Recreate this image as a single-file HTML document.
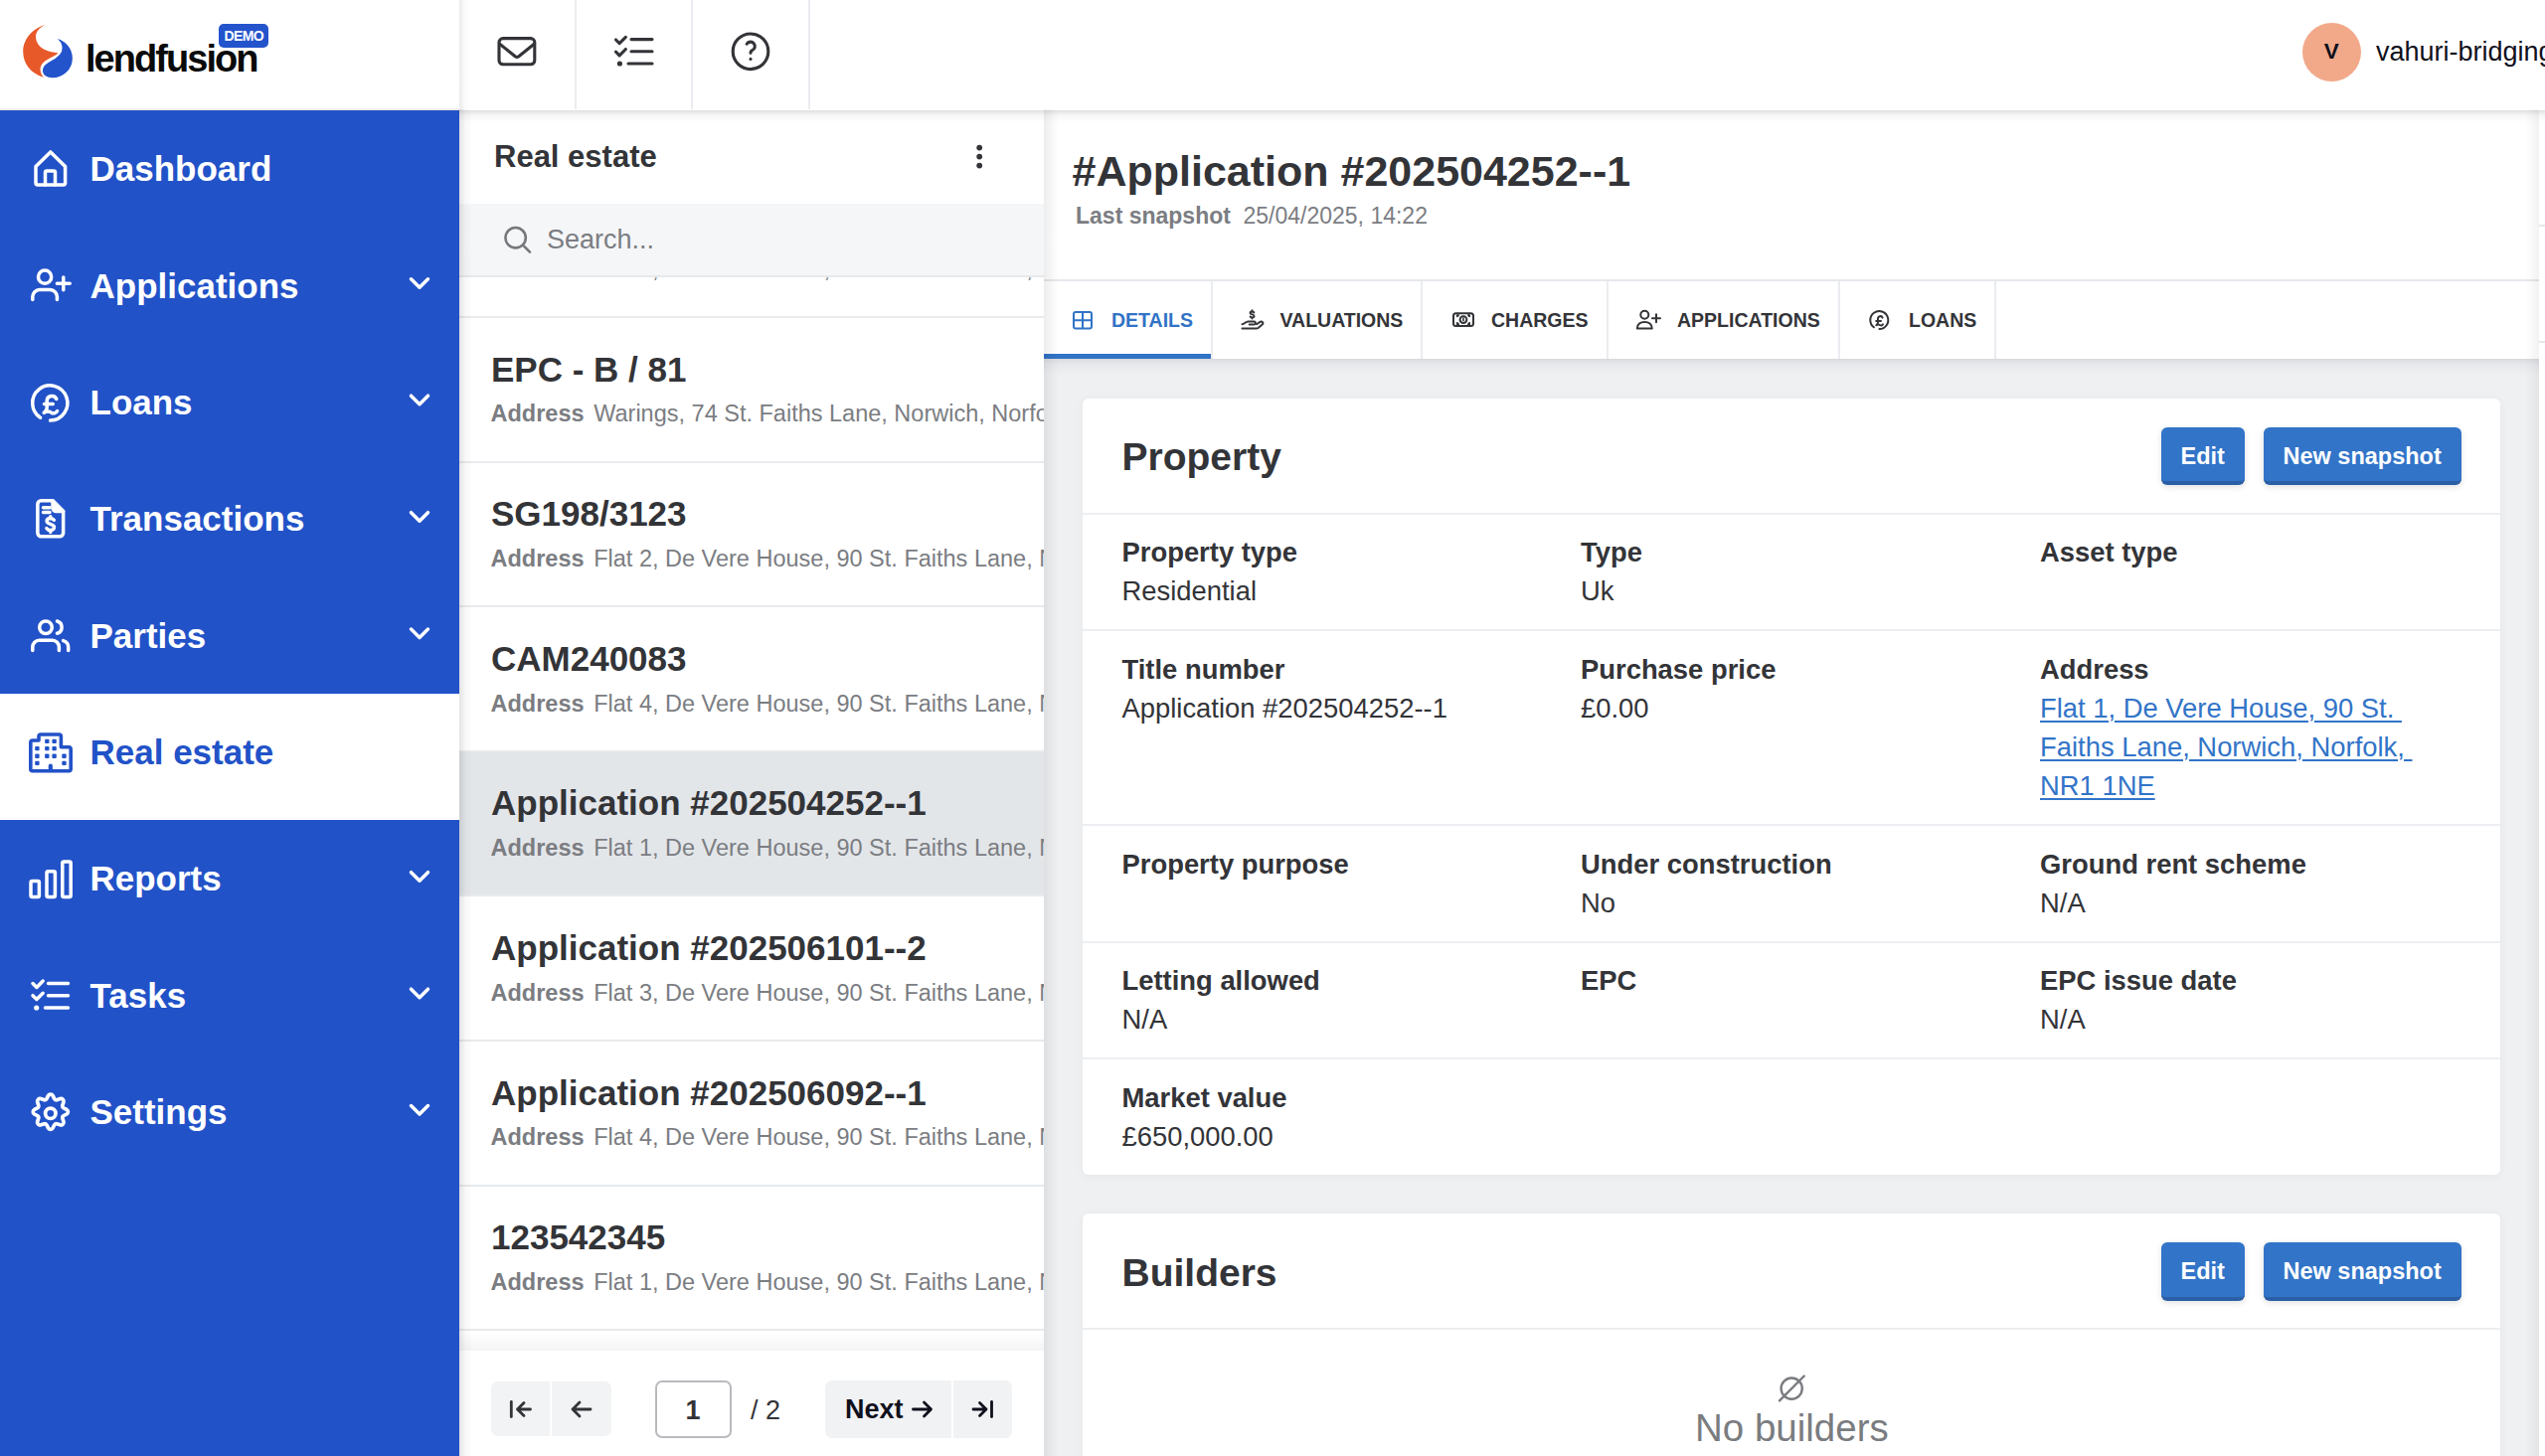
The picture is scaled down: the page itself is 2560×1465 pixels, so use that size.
<!DOCTYPE html><html><head><meta charset="utf-8"><title>Real estate</title><style>
*{box-sizing:border-box;margin:0;padding:0}
html,body{width:2560px;height:1465px;overflow:hidden;background:#fff}
body{position:relative;font-family:"Liberation Sans",sans-serif;-webkit-font-smoothing:antialiased}
.a{position:absolute}
.t{position:absolute;white-space:nowrap}
svg.ic{position:absolute;overflow:visible}
</style></head><body>
<div class="a" style="left:1050.00px;top:110.00px;width:1504.00px;height:1355.00px;background:#eff0f2;"></div>
<div class="a" style="left:2554.00px;top:110.00px;width:6.00px;height:1355.00px;background:#ffffff;"></div>
<div class="a" style="left:2554.00px;top:226.00px;width:6.00px;height:2.00px;background:#e5e7eb;"></div>
<div class="a" style="left:2554.00px;top:343.00px;width:6.00px;height:2.00px;background:#e5e7eb;"></div>
<div class="a" style="left:1050.00px;top:110.00px;width:1504.00px;height:172.00px;background:#ffffff;"></div>
<div class="a" style="left:1050.00px;top:281.00px;width:1504.00px;height:2.00px;background:#e5e7eb;"></div>
<div class="t " style="left:1078.50px;top:144.60px;font-size:43px;line-height:54px;color:#333438;font-weight:700;">#Application #202504252--1</div>
<div class="t " style="left:1082.00px;top:203.13px;font-size:23px;line-height:29px;color:#7b7d82;font-weight:700;">Last snapshot</div>
<div class="t " style="left:1250.50px;top:203.13px;font-size:23px;line-height:29px;color:#7b7d82;">25/04/2025, 14:22</div>
<div class="a" style="left:1050.00px;top:283.00px;width:1504.00px;height:78.00px;background:#ffffff;"></div>
<div class="a" style="left:1218.00px;top:283.00px;width:2.00px;height:78.00px;background:#ebecf0;"></div>
<div class="a" style="left:1429.00px;top:283.00px;width:2.00px;height:78.00px;background:#ebecf0;"></div>
<div class="a" style="left:1616.00px;top:283.00px;width:2.00px;height:78.00px;background:#ebecf0;"></div>
<div class="a" style="left:1849.00px;top:283.00px;width:2.00px;height:78.00px;background:#ebecf0;"></div>
<div class="a" style="left:2006.00px;top:283.00px;width:2.00px;height:78.00px;background:#ebecf0;"></div>
<div class="a" style="left:1050.00px;top:355.50px;width:168.00px;height:5.50px;background:#3173c6;"></div>
<div class="a" style="left:1050.00px;top:361.00px;width:1504.00px;height:16.00px;background:#eff0f2;background:linear-gradient(#d9dadd,#e7e8eb 35%,rgba(239,240,242,0))"></div>
<div class="t " style="left:1118.00px;top:309.84px;font-size:19.5px;line-height:24px;color:#3173c6;font-weight:700;">DETAILS</div>
<div class="t " style="left:1287.50px;top:309.84px;font-size:19.5px;line-height:24px;color:#333438;font-weight:700;">VALUATIONS</div>
<div class="t " style="left:1500.00px;top:309.84px;font-size:19.5px;line-height:24px;color:#333438;font-weight:700;">CHARGES</div>
<div class="t " style="left:1687.00px;top:309.84px;font-size:19.5px;line-height:24px;color:#333438;font-weight:700;">APPLICATIONS</div>
<div class="t " style="left:1920.00px;top:309.84px;font-size:19.5px;line-height:24px;color:#333438;font-weight:700;">LOANS</div>
<div class="a" style="left:1089px;top:400.5px;width:1426px;height:781px;background:#fff;border-radius:6px;box-shadow:0 1px 10px rgba(0,0,0,0.05)"></div>
<div class="t " style="left:1128.50px;top:435.49px;font-size:39px;line-height:49px;color:#333438;font-weight:700;">Property</div>
<div class="a" style="left:2174px;top:429.7px;width:83.5px;height:58.5px;background:#3274c8;border-radius:6px;border-bottom:4px solid #2a5fa6;box-shadow:0 2px 6px rgba(0,0,0,0.12)"></div>
<div class="a" style="left:2277px;top:429.7px;width:199px;height:58.5px;background:#3274c8;border-radius:6px;border-bottom:4px solid #2a5fa6;box-shadow:0 2px 6px rgba(0,0,0,0.12)"></div>
<div class="t " style="left:2193.50px;top:444.76px;font-size:23.5px;line-height:29px;color:#ffffff;font-weight:700;">Edit</div>
<div class="t " style="left:2296.50px;top:444.76px;font-size:23.5px;line-height:29px;color:#ffffff;font-weight:700;">New snapshot</div>
<div class="a" style="left:1089.00px;top:516.00px;width:1426.00px;height:2.00px;background:#eceef1;"></div>
<div class="a" style="left:1089.00px;top:633.00px;width:1426.00px;height:2.00px;background:#eceef1;"></div>
<div class="a" style="left:1089.00px;top:829.20px;width:1426.00px;height:2.00px;background:#eceef1;"></div>
<div class="a" style="left:1089.00px;top:947.10px;width:1426.00px;height:2.00px;background:#eceef1;"></div>
<div class="a" style="left:1089.00px;top:1064.30px;width:1426.00px;height:2.00px;background:#eceef1;"></div>
<div class="t " style="left:1128.50px;top:538.81px;font-size:27.4px;line-height:34px;color:#333438;font-weight:700;">Property type</div>
<div class="t " style="left:1128.50px;top:577.81px;font-size:27.4px;line-height:34px;color:#333438;">Residential</div>
<div class="t " style="left:1590.00px;top:538.81px;font-size:27.4px;line-height:34px;color:#333438;font-weight:700;">Type</div>
<div class="t " style="left:1590.00px;top:577.81px;font-size:27.4px;line-height:34px;color:#333438;">Uk</div>
<div class="t " style="left:2052.00px;top:538.81px;font-size:27.4px;line-height:34px;color:#333438;font-weight:700;">Asset type</div>
<div class="t " style="left:1128.50px;top:656.51px;font-size:27.4px;line-height:34px;color:#333438;font-weight:700;">Title number</div>
<div class="t " style="left:1128.50px;top:695.51px;font-size:27.4px;line-height:34px;color:#333438;">Application #202504252--1</div>
<div class="t " style="left:1590.00px;top:656.51px;font-size:27.4px;line-height:34px;color:#333438;font-weight:700;">Purchase price</div>
<div class="t " style="left:1590.00px;top:695.51px;font-size:27.4px;line-height:34px;color:#333438;">&pound;0.00</div>
<div class="t " style="left:2052.00px;top:656.51px;font-size:27.4px;line-height:34px;color:#333438;font-weight:700;">Address</div>
<div class="t " style="left:2052.00px;top:695.51px;font-size:27.4px;line-height:34px;color:#3274c8;text-decoration:underline;text-decoration-thickness:2px;text-underline-offset:3px">Flat 1, De Vere House, 90 St.&nbsp;</div>
<div class="t " style="left:2052.00px;top:734.51px;font-size:27.4px;line-height:34px;color:#3274c8;text-decoration:underline;text-decoration-thickness:2px;text-underline-offset:3px">Faiths Lane, Norwich, Norfolk,&nbsp;</div>
<div class="t " style="left:2052.00px;top:773.51px;font-size:27.4px;line-height:34px;color:#3274c8;text-decoration:underline;text-decoration-thickness:2px;text-underline-offset:3px">NR1 1NE</div>
<div class="t " style="left:1128.50px;top:852.71px;font-size:27.4px;line-height:34px;color:#333438;font-weight:700;">Property purpose</div>
<div class="t " style="left:1590.00px;top:852.71px;font-size:27.4px;line-height:34px;color:#333438;font-weight:700;">Under construction</div>
<div class="t " style="left:1590.00px;top:891.71px;font-size:27.4px;line-height:34px;color:#333438;">No</div>
<div class="t " style="left:2052.00px;top:852.71px;font-size:27.4px;line-height:34px;color:#333438;font-weight:700;">Ground rent scheme</div>
<div class="t " style="left:2052.00px;top:891.71px;font-size:27.4px;line-height:34px;color:#333438;">N/A</div>
<div class="t " style="left:1128.50px;top:969.51px;font-size:27.4px;line-height:34px;color:#333438;font-weight:700;">Letting allowed</div>
<div class="t " style="left:1128.50px;top:1008.51px;font-size:27.4px;line-height:34px;color:#333438;">N/A</div>
<div class="t " style="left:1590.00px;top:969.51px;font-size:27.4px;line-height:34px;color:#333438;font-weight:700;">EPC</div>
<div class="t " style="left:2052.00px;top:969.51px;font-size:27.4px;line-height:34px;color:#333438;font-weight:700;">EPC issue date</div>
<div class="t " style="left:2052.00px;top:1008.51px;font-size:27.4px;line-height:34px;color:#333438;">N/A</div>
<div class="t " style="left:1128.50px;top:1087.71px;font-size:27.4px;line-height:34px;color:#333438;font-weight:700;">Market value</div>
<div class="t " style="left:1128.50px;top:1126.71px;font-size:27.4px;line-height:34px;color:#333438;">&pound;650,000.00</div>
<div class="a" style="left:1089px;top:1220.7px;width:1426px;height:300px;background:#fff;border-radius:6px;box-shadow:0 1px 10px rgba(0,0,0,0.05)"></div>
<div class="t " style="left:1128.50px;top:1255.59px;font-size:39px;line-height:49px;color:#333438;font-weight:700;">Builders</div>
<div class="a" style="left:2174px;top:1250px;width:83.5px;height:58.5px;background:#3274c8;border-radius:6px;border-bottom:4px solid #2a5fa6;box-shadow:0 2px 6px rgba(0,0,0,0.12)"></div>
<div class="a" style="left:2277px;top:1250px;width:199px;height:58.5px;background:#3274c8;border-radius:6px;border-bottom:4px solid #2a5fa6;box-shadow:0 2px 6px rgba(0,0,0,0.12)"></div>
<div class="t " style="left:2193.50px;top:1265.06px;font-size:23.5px;line-height:29px;color:#ffffff;font-weight:700;">Edit</div>
<div class="t " style="left:2296.50px;top:1265.06px;font-size:23.5px;line-height:29px;color:#ffffff;font-weight:700;">New snapshot</div>
<div class="a" style="left:1089.00px;top:1336.30px;width:1426.00px;height:2.00px;background:#eceef1;"></div>
<svg class="ic" style="left:0;top:0" width="2560" height="1465"><g fill="none" stroke="#7a7c80" stroke-width="2.4" stroke-linecap="round"><circle cx="1802.2" cy="1397.1" r="10.6"/><line x1="1790" y1="1409.3" x2="1814.8" y2="1384.5"/></g></svg>
<div class="t " style="left:1705.00px;top:1412.56px;font-size:38.5px;line-height:48px;color:#7a7c80;">No builders</div>
<div class="a" style="left:1050.00px;top:110.00px;width:14.00px;height:1355.00px;background:transparent;background:linear-gradient(90deg,rgba(0,0,0,0.07),rgba(0,0,0,0))"></div>
<div class="a" style="left:2540.00px;top:110.00px;width:14.00px;height:1355.00px;background:transparent;background:linear-gradient(270deg,rgba(0,0,0,0.05),rgba(0,0,0,0))"></div>
<div class="a" style="left:462.00px;top:110.00px;width:588.00px;height:1355.00px;background:#ffffff;"></div>
<div class="a" style="left:462px;top:110px;width:588px;height:1249px;overflow:hidden">
<div class="a" style="left:0.00px;top:207.90px;width:588.00px;height:2.00px;background:#e8eaed;"></div>
<div class="t " style="left:31.50px;top:146.86px;font-size:23.5px;line-height:29px;color:#7b7d82;font-weight:700;">Address</div>
<div class="t " style="left:135.20px;top:146.86px;font-size:23.5px;line-height:29px;color:#7b7d82;">Flat 5, De Vere House, 90 St. Faiths Lane, Norwich, Norfolk</div>
<div class="a" style="left:0.00px;top:353.50px;width:588.00px;height:2.00px;background:#e8eaed;"></div>
<div class="t " style="left:32.00px;top:239.57px;font-size:35px;line-height:44px;color:#333438;font-weight:700;">EPC - B / 81</div>
<div class="t " style="left:31.50px;top:292.46px;font-size:23.5px;line-height:29px;color:#7b7d82;font-weight:700;">Address</div>
<div class="t " style="left:135.20px;top:292.46px;font-size:23.5px;line-height:29px;color:#7b7d82;">Warings, 74 St. Faiths Lane, Norwich, Norfolk, NR1 1NE</div>
<div class="a" style="left:0.00px;top:499.10px;width:588.00px;height:2.00px;background:#e8eaed;"></div>
<div class="t " style="left:32.00px;top:385.17px;font-size:35px;line-height:44px;color:#333438;font-weight:700;">SG198/3123</div>
<div class="t " style="left:31.50px;top:438.06px;font-size:23.5px;line-height:29px;color:#7b7d82;font-weight:700;">Address</div>
<div class="t " style="left:135.20px;top:438.06px;font-size:23.5px;line-height:29px;color:#7b7d82;">Flat 2, De Vere House, 90 St. Faiths Lane, Norwich</div>
<div class="a" style="left:0.00px;top:644.70px;width:588.00px;height:2.00px;background:#e8eaed;"></div>
<div class="t " style="left:32.00px;top:530.77px;font-size:35px;line-height:44px;color:#333438;font-weight:700;">CAM240083</div>
<div class="t " style="left:31.50px;top:583.66px;font-size:23.5px;line-height:29px;color:#7b7d82;font-weight:700;">Address</div>
<div class="t " style="left:135.20px;top:583.66px;font-size:23.5px;line-height:29px;color:#7b7d82;">Flat 4, De Vere House, 90 St. Faiths Lane, Norwich</div>
<div class="a" style="left:0.00px;top:646.70px;width:588.00px;height:145.60px;background:#e3e6e9;"></div>
<div class="a" style="left:0.00px;top:790.30px;width:588.00px;height:2.00px;background:#e8eaed;"></div>
<div class="t " style="left:32.00px;top:676.37px;font-size:35px;line-height:44px;color:#333438;font-weight:700;">Application #202504252--1</div>
<div class="t " style="left:31.50px;top:729.26px;font-size:23.5px;line-height:29px;color:#7b7d82;font-weight:700;">Address</div>
<div class="t " style="left:135.20px;top:729.26px;font-size:23.5px;line-height:29px;color:#7b7d82;">Flat 1, De Vere House, 90 St. Faiths Lane, Norwich</div>
<div class="a" style="left:0.00px;top:935.90px;width:588.00px;height:2.00px;background:#e8eaed;"></div>
<div class="t " style="left:32.00px;top:821.97px;font-size:35px;line-height:44px;color:#333438;font-weight:700;">Application #202506101--2</div>
<div class="t " style="left:31.50px;top:874.86px;font-size:23.5px;line-height:29px;color:#7b7d82;font-weight:700;">Address</div>
<div class="t " style="left:135.20px;top:874.86px;font-size:23.5px;line-height:29px;color:#7b7d82;">Flat 3, De Vere House, 90 St. Faiths Lane, Norwich</div>
<div class="a" style="left:0.00px;top:1081.50px;width:588.00px;height:2.00px;background:#e8eaed;"></div>
<div class="t " style="left:32.00px;top:967.57px;font-size:35px;line-height:44px;color:#333438;font-weight:700;">Application #202506092--1</div>
<div class="t " style="left:31.50px;top:1020.46px;font-size:23.5px;line-height:29px;color:#7b7d82;font-weight:700;">Address</div>
<div class="t " style="left:135.20px;top:1020.46px;font-size:23.5px;line-height:29px;color:#7b7d82;">Flat 4, De Vere House, 90 St. Faiths Lane, Norwich</div>
<div class="a" style="left:0.00px;top:1227.10px;width:588.00px;height:2.00px;background:#e8eaed;"></div>
<div class="t " style="left:32.00px;top:1113.17px;font-size:35px;line-height:44px;color:#333438;font-weight:700;">123542345</div>
<div class="t " style="left:31.50px;top:1166.06px;font-size:23.5px;line-height:29px;color:#7b7d82;font-weight:700;">Address</div>
<div class="t " style="left:135.20px;top:1166.06px;font-size:23.5px;line-height:29px;color:#7b7d82;">Flat 1, De Vere House, 90 St. Faiths Lane, Norwich</div>
<div class="a" style="left:0.00px;top:1372.70px;width:588.00px;height:2.00px;background:#e8eaed;"></div>
<div class="t " style="left:32.00px;top:1258.77px;font-size:35px;line-height:44px;color:#333438;font-weight:700;">Application #202506093--1</div>
<div class="t " style="left:31.50px;top:1311.66px;font-size:23.5px;line-height:29px;color:#7b7d82;font-weight:700;">Address</div>
<div class="t " style="left:135.20px;top:1311.66px;font-size:23.5px;line-height:29px;color:#7b7d82;">Flat 2, De Vere House, 90 St. Faiths Lane, Norwich</div>
</div>
<div class="a" style="left:462.00px;top:110.00px;width:588.00px;height:95.00px;background:#ffffff;"></div>
<div class="t " style="left:497.00px;top:137.76px;font-size:31px;line-height:39px;color:#333438;font-weight:700;">Real estate</div>
<svg class="ic" style="left:0;top:0" width="2560" height="1465"><g fill="#333438"><circle cx="985.2" cy="148.6" r="2.9"/><circle cx="985.2" cy="157.6" r="2.9"/><circle cx="985.2" cy="166.6" r="2.9"/></g></svg>
<div class="a" style="left:462.00px;top:204.70px;width:588.00px;height:73.00px;background:#f5f6f8;"></div>
<div class="a" style="left:462.00px;top:277.00px;width:588.00px;height:1.50px;background:#e6e8eb;"></div>
<svg class="ic" style="left:0;top:0" width="2560" height="1465"><g fill="none" stroke="#76787c" stroke-width="2.6" stroke-linecap="round"><circle cx="518.6" cy="239.2" r="10.2"/><line x1="526" y1="246.6" x2="533" y2="253.6"/></g></svg>
<div class="t " style="left:550.00px;top:223.94px;font-size:27px;line-height:34px;color:#7b7d82;">Search...</div>
<div class="a" style="left:462.00px;top:1340.00px;width:588.00px;height:19.00px;background:transparent;background:linear-gradient(rgba(0,0,0,0),rgba(0,0,0,0.045))"></div>
<div class="a" style="left:462.00px;top:1359.00px;width:588.00px;height:106.00px;background:#ffffff;"></div>
<div class="a" style="left:494px;top:1390.3px;width:121px;height:55px;background:#f2f3f5;border-radius:7px"></div>
<div class="a" style="left:553.00px;top:1390.30px;width:2.00px;height:55.00px;background:#ffffff;"></div>
<div class="a" style="left:658.5px;top:1389px;width:77.5px;height:58px;border:2px solid #b8babe;border-radius:7px;background:#fff"></div>
<div class="t " style="left:689.50px;top:1401.64px;font-size:27px;line-height:34px;color:#333438;font-weight:700;">1</div>
<div class="t " style="left:755.00px;top:1401.64px;font-size:27px;line-height:34px;color:#333438;">/ 2</div>
<div class="a" style="left:829.5px;top:1389px;width:188.5px;height:58px;background:#f1f2f4;border-radius:7px"></div>
<div class="a" style="left:957.00px;top:1389.00px;width:2.00px;height:58.00px;background:#ffffff;"></div>
<div class="t " style="left:850.00px;top:1401.44px;font-size:27px;line-height:34px;color:#10101c;font-weight:700;">Next</div>
<svg class="ic" style="left:0;top:0" width="2560" height="1465"><g fill="none" stroke="#333438" stroke-width="2.8" stroke-linecap="round" stroke-linejoin="round">
<line x1="514.3" y1="1410.5" x2="514.3" y2="1425.5"/><path d="M533.5 1418h-13M527 1411.5l-6.5 6.5l6.5 6.5"/>
<path d="M594 1418h-18M583 1411l-7 7l7 7"/>
</g><g fill="none" stroke="#10101c" stroke-width="2.8" stroke-linecap="round" stroke-linejoin="round">
<path d="M918.5 1418h18M929.5 1411l7 7l-7 7"/>
<line x1="997.5" y1="1410.5" x2="997.5" y2="1425.5"/><path d="M979 1418h13M985.5 1411.5l6.5 6.5l-6.5 6.5"/>
</g></svg>
<div class="a" style="left:462.00px;top:110.00px;width:13.00px;height:1355.00px;background:transparent;background:linear-gradient(90deg,rgba(0,0,0,0.11),rgba(0,0,0,0.03) 45%,rgba(0,0,0,0))"></div>
<div class="a" style="left:0.00px;top:110.70px;width:462.00px;height:1355.00px;background:#2252c8;"></div>
<div class="a" style="left:0.00px;top:698.00px;width:462.00px;height:127.00px;background:#ffffff;"></div>
<div class="t " style="left:90.50px;top:148.07px;font-size:35px;line-height:44px;color:#ffffff;font-weight:700;">Dashboard</div>
<div class="t " style="left:90.50px;top:265.52px;font-size:35px;line-height:44px;color:#ffffff;font-weight:700;">Applications</div>
<div class="t " style="left:90.50px;top:382.97px;font-size:35px;line-height:44px;color:#ffffff;font-weight:700;">Loans</div>
<div class="t " style="left:90.50px;top:500.42px;font-size:35px;line-height:44px;color:#ffffff;font-weight:700;">Transactions</div>
<div class="t " style="left:90.50px;top:617.87px;font-size:35px;line-height:44px;color:#ffffff;font-weight:700;">Parties</div>
<div class="t " style="left:90.50px;top:735.32px;font-size:35px;line-height:44px;color:#2252c8;font-weight:700;">Real estate</div>
<div class="t " style="left:90.50px;top:862.47px;font-size:35px;line-height:44px;color:#ffffff;font-weight:700;">Reports</div>
<div class="t " style="left:90.50px;top:979.92px;font-size:35px;line-height:44px;color:#ffffff;font-weight:700;">Tasks</div>
<div class="t " style="left:90.50px;top:1097.37px;font-size:35px;line-height:44px;color:#ffffff;font-weight:700;">Settings</div>
<svg class="ic" style="left:0;top:0" width="2560" height="1465"><g fill="none" stroke="#fff" stroke-width="3.5" stroke-linecap="round" stroke-linejoin="round"><path d="M36 167.5l14.8-14.6l14.8 14.6v16.5a2 2 0 0 1-2 2h-25.6a2 2 0 0 1-2-2z"/><path d="M45.5 186v-12.5a1.5 1.5 0 0 1 1.5-1.5h7a1.5 1.5 0 0 1 1.5 1.5v12.5"/><circle cx="45.1" cy="278.7" r="6.6"/><path d="M32.8 301.6v-3a7 7 0 0 1 7-7h10.6a7 7 0 0 1 7 7v3"/><path d="M57.4 285.3h12.8M63.8 278.9v12.8"/><path d="M413.5 280.75l8.5 8.5l8.5 -8.5"/><g transform="translate(0,1)"><path d="M40.6 419.2a17.6 17.6 0 1 1 10 2.9"/><path d="M56.8 400.5a5 5 0 0 0-9.6 1.8v6.8c0 2-.8 3.8-3 5.2c2.6-1.6 5.2-1.6 7-.4c2.4 1.5 5.2 1.2 6.4-1.4M44.5 405.6h8.8"/></g><path d="M413.5 398.20000000000005l8.5 8.5l8.5 -8.5"/><path d="M53 503.75H41.35a3.5 3.5 0 0 0-3.5 3.5V536.25a3.5 3.5 0 0 0 3.5 3.5H60.15a3.5 3.5 0 0 0 3.5-3.5V514.5z"/><path d="M53 503.75V511a3.5 3.5 0 0 0 3.5 3.5H63.65z" fill="#fff"/><path d="M43.5 510.8h6.5M43.5 515.5h6.5"/><path d="M54.3 523.3c-1-1.4-2.4-1.8-3.6-1.8c-2.2 0-3.6 1.2-3.6 2.8c0 3.8 7.4 2.3 7.4 6.2c0 1.7-1.6 3-3.8 3c-1.6 0-3-.6-3.8-1.9M50.8 519.7v2M50.8 533.4v2"/><path d="M413.5 515.6499999999999l8.5 8.5l8.5 -8.5"/><circle cx="46" cy="631.3" r="6.3"/><path d="M32.8 654.6v-3.5a6.8 6.8 0 0 1 6.8-6.8h13a6.8 6.8 0 0 1 6.8 6.8v3.5"/><path d="M57.5 625a6.4 6.4 0 0 1 0 12.3M63.7 644.6a6.8 6.8 0 0 1 5 6.5v3.5"/><path d="M413.5 633.0999999999999l8.5 8.5l8.5 -8.5"/><rect x="31" y="886.5" width="8.4" height="16" rx="1.5"/><rect x="47" y="876.8" width="8.4" height="25.7" rx="1.5"/><rect x="62.8" y="867" width="8.4" height="35.5" rx="1.5"/><path d="M413.5 877.7l8.5 8.5l8.5 -8.5"/><path d="M33 989.5l3.9 3.9l6.3-6.3M33 1001.7l3.9 3.9l6.3-6.3"/><path d="M48.5 989.5h20M48.5 1001.7h20M45.5 1014h23"/></g><circle cx="36.7" cy="1014" r="2.6" fill="#fff"/><g fill="none" stroke="#fff" stroke-width="3.5" stroke-linecap="round" stroke-linejoin="round"><path d="M413.5 995.1499999999999l8.5 8.5l8.5 -8.5"/><g transform="translate(50.8 1120.3) scale(1.06) translate(-50.8 -1119.2)"><path d="M48.5 1102.5a2.6 2.6 0 0 1 4.6 0l1.1 2.4a2.6 2.6 0 0 0 3.2 1.3l2.5-.9a2.6 2.6 0 0 1 3.3 3.3l-.9 2.5a2.6 2.6 0 0 0 1.3 3.2l2.4 1.1a2.6 2.6 0 0 1 0 4.6l-2.4 1.1a2.6 2.6 0 0 0-1.3 3.2l.9 2.5a2.6 2.6 0 0 1-3.3 3.3l-2.5-.9a2.6 2.6 0 0 0-3.2 1.3l-1.1 2.4a2.6 2.6 0 0 1-4.6 0l-1.1-2.4a2.6 2.6 0 0 0-3.2-1.3l-2.5.9a2.6 2.6 0 0 1-3.3-3.3l.9-2.5a2.6 2.6 0 0 0-1.3-3.2l-2.4-1.1a2.6 2.6 0 0 1 0-4.6l2.4-1.1a2.6 2.6 0 0 0 1.3-3.2l-.9-2.5a2.6 2.6 0 0 1 3.3-3.3l2.5.9a2.6 2.6 0 0 0 3.2-1.3z"/><circle cx="50.8" cy="1119.2" r="4.9"/></g><path d="M413.5 1112.6l8.5 8.5l8.5 -8.5"/></g><g fill="none" stroke="#2252c8" stroke-width="3.6" stroke-linecap="round" stroke-linejoin="round"><path d="M30.8 747a2 2 0 0 1 2-2h6.2v-4a2 2 0 0 1 2-2h18.4a2 2 0 0 1 2 2v10.8h7.8a2 2 0 0 1 2 2v20a2 2 0 0 1-2 2h-36.4a2 2 0 0 1-2-2z"/><path d="M50.8 774.5v-3.8" stroke-width="4.2"/></g><g fill="#2252c8"><rect x="45.099999999999994" y="743.6999999999999" width="4.4" height="4.4" rx="1"/><rect x="52.4" y="743.6999999999999" width="4.4" height="4.4" rx="1"/><rect x="35.199999999999996" y="750.9" width="4.4" height="4.4" rx="1"/><rect x="45.099999999999994" y="750.9" width="4.4" height="4.4" rx="1"/><rect x="52.4" y="750.9" width="4.4" height="4.4" rx="1"/><rect x="35.199999999999996" y="758.5999999999999" width="4.4" height="4.4" rx="1"/><rect x="45.099999999999994" y="758.5999999999999" width="4.4" height="4.4" rx="1"/><rect x="52.4" y="758.5999999999999" width="4.4" height="4.4" rx="1"/><rect x="62.3" y="758.5999999999999" width="4.4" height="4.4" rx="1"/><rect x="35.199999999999996" y="765.6999999999999" width="4.4" height="4.4" rx="1"/><rect x="62.3" y="765.6999999999999" width="4.4" height="4.4" rx="1"/></g></svg>
<div class="a" style="left:0.00px;top:0.00px;width:2560.00px;height:110.00px;background:#ffffff;"></div>
<div class="a" style="left:462.00px;top:110.70px;width:2098.00px;height:12.00px;background:transparent;background:linear-gradient(rgba(0,0,0,0.12),rgba(0,0,0,0.04) 40%,rgba(0,0,0,0))"></div>
<div class="a" style="left:462.00px;top:0.00px;width:12.00px;height:110.70px;background:transparent;background:linear-gradient(90deg,rgba(0,0,0,0.08),rgba(0,0,0,0.02) 45%,rgba(0,0,0,0))"></div>
<div class="a" style="left:0.00px;top:108.20px;width:462.00px;height:2.50px;background:transparent;background:linear-gradient(rgba(0,0,0,0),rgba(0,0,0,0.12))"></div>
<div class="a" style="left:578.00px;top:0.00px;width:2.00px;height:110.00px;background:#ebecf0;"></div>
<div class="a" style="left:695.00px;top:0.00px;width:2.00px;height:110.00px;background:#ebecf0;"></div>
<div class="a" style="left:812.50px;top:0.00px;width:2.00px;height:110.00px;background:#ebecf0;"></div>
<svg class="ic" style="left:0;top:0" width="300" height="110">
<path d="M45.2 24.9C33 28.5 23.2 39 23.2 52C23.2 64.5 31.5 74.5 44.2 77.7C40.8 74.5 40 70.5 41 67C42.5 62.5 47 60 52 57.5C55 56 57 55 58.6 53.4C54 52.6 49 52 45 50C39 47 36 42 36 37C36 32 39.5 27.8 45.2 24.9Z" fill="#e8592a"/>
<path d="M54 37C66 39.5 73.5 48 73.5 58.5C73.5 70 64.3 79 52.6 79C47.2 79 43 76.2 42.3 72C41.8 68 44 65 48.2 62.5C53 59.5 59.5 57 61.6 51C63.2 46 60.2 40.2 54 37Z" fill="#2454cc" stroke="#fff" stroke-width="1.3"/>
</svg>
<div class="t " style="left:86.00px;top:35.03px;font-size:38px;line-height:48px;color:#0a0a0a;font-weight:700;letter-spacing:-1.95px">lendfusion</div>
<div class="a" style="left:220.3px;top:24.3px;width:50px;height:23.7px;background:#2454cc;border-radius:5px"></div>
<div class="t " style="left:225.50px;top:27.35px;font-size:14px;line-height:18px;color:#ffffff;font-weight:700;letter-spacing:-0.6px">DEMO</div>
<svg class="ic" style="left:0;top:0" width="2560" height="110"><g fill="none" stroke="#333438" stroke-width="3.1" stroke-linecap="round" stroke-linejoin="round">
<rect x="502" y="38.6" width="35.8" height="26.2" rx="4"/><path d="M503 44.5l15.2 12.2a3 3 0 0 0 3.6 0l15.2-12.2"/>
<path d="M619.5 40l3.6 3.6l6.3-6.3M619.5 52.2l3.6 3.6l6.3-6.3"/><path d="M635 39.6h21M635 51.8h21M632 64h24"/></g><circle cx="623.4" cy="64" r="2.6" fill="#333438"/><g fill="none" stroke="#333438" stroke-width="3.1" stroke-linecap="round" stroke-linejoin="round">
<circle cx="755" cy="51.8" r="17.8"/><path d="M755 59.3v.1"/><path d="M755 53.2a2.8 2.8 0 0 1 1.6-2.6a4.4 4.4 0 1 0-5.4-6.4"/>
</g></svg>
<div class="a" style="left:2316px;top:22.5px;width:59px;height:59px;border-radius:50%;background:#f1a98a"></div>
<div class="t " style="left:2337.80px;top:38.00px;font-size:22.5px;line-height:28px;color:#10101c;font-weight:700;">V</div>
<div class="t " style="left:2390.00px;top:35.44px;font-size:27px;line-height:34px;color:#10101c;">vahuri-bridging</div>
<svg class="ic" style="left:0;top:0" width="2560" height="1465"><g fill="none" stroke="#333438" stroke-width="2" stroke-linecap="round" stroke-linejoin="round">
<path d="M1249.5 330.5h14a4 4 0 0 0 2.4-.8l3.8-3.2a1.7 1.7 0 0 0-2.2-2.6l-3.5 2.4"/><path d="M1249.5 326.2c2.3 0 3.2-2.6 6.4-2.6h5.4c1.2 0 1.8 1 1.6 1.8c-.2.9-1 1.2-1.8 1.2h-4.4"/>
<path d="M1261.3 314.4c-.4-.6-1.1-.9-1.8-.9c-1.1 0-1.9.6-1.9 1.4c0 1.9 3.9 1.1 3.9 3.1c0 .8-.8 1.5-1.9 1.5c-.8 0-1.5-.3-1.9-.9M1259.5 312.3v1M1259.5 319.6v1"/>
<rect x="1462" y="315.3" width="20" height="12.6" rx="2.5"/><circle cx="1472" cy="321.6" r="3.4"/>
<circle cx="1654.3" cy="316.7" r="4"/><path d="M1646.8 330.5c0-4.3 3.3-6.6 7.5-6.6s7.5 2.3 7.5 6.6z"/><path d="M1662 320.2h8M1666 316.2v8"/>
<path d="M1884.9 329.3A9 9 0 1 1 1890.5 331.1"/><path d="M1893.6 319.6a2.4 2.4 0 0 0-4.6 1v3.8c0 1-.4 1.9-1.7 2.8c1.4-.8 2.7-.8 3.6-.2c1.1.7 2.5.6 3.1-.6M1887.2 322.9h4.8"/>
</g>
<g fill="#333438"><path d="M1465 316.3h3a3 3 0 0 1-3 3zM1479 316.3h-3a3 3 0 0 0 3 3zM1465 327h3a3 3 0 0 0-3-3zM1479 327h-3a3 3 0 0 1 3-3z"/><rect x="1471.2" y="319.5" width="1.6" height="3.6"/></g>
<g fill="none" stroke="#3173c6" stroke-width="2" stroke-linejoin="round"><rect x="1080" y="314" width="18" height="16.5" rx="2"/><path d="M1089 314v16.5M1080 322.25h18"/></g>
</svg>
</body></html>
